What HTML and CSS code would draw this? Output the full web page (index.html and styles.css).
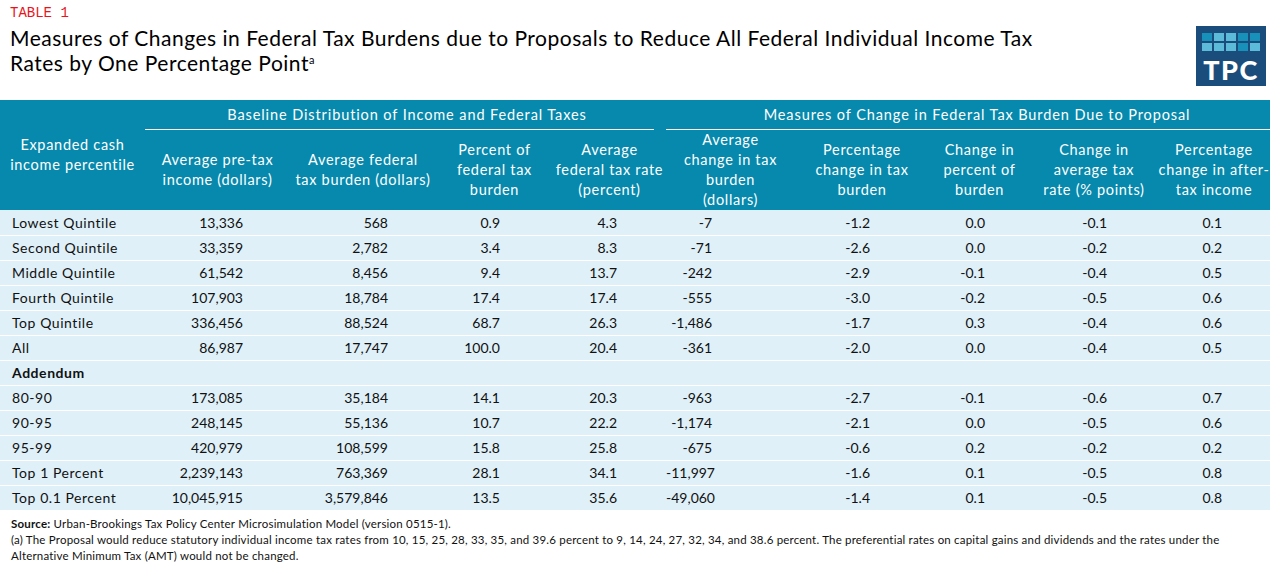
FILE: index.html
```html
<!DOCTYPE html>
<html>
<head>
<meta charset="utf-8">
<link rel="stylesheet" href="styles.css">
</head>
<body>
<div class="page">
  <header class="top">
    <div class="titles">
      <div class="label">TABLE 1</div>
      <h1 class="title">Measures of Changes in Federal Tax Burdens due to Proposals to Reduce All Federal Individual Income Tax<br>Rates by One Percentage Point<sup>a</sup></h1>
    </div>
    <div class="logo">
      <div class="grid">
        <span class="d"></span><span class="l"></span><span class="l"></span><span class="d"></span><span class="d"></span>
        <span class="l"></span><span class="l"></span><span class="l"></span><span class="d"></span><span class="l"></span>
      </div>
      <div class="logo-text">TPC</div>
    </div>
  </header>

  <table class="data">
    <colgroup>
      <col class="w1"><col class="w2"><col class="w3"><col class="w4"><col class="w5">
      <col class="w6"><col class="w7"><col class="w8"><col class="w9"><col class="w10">
    </colgroup>
    <thead>
      <tr class="group">
        <th rowspan="2" class="first">Expanded cash<br>income percentile</th>
        <th colspan="4"><div class="gline g1">Baseline Distribution of Income and Federal Taxes</div></th>
        <th colspan="5"><div class="gline g2">Measures of Change in Federal Tax Burden Due to Proposal</div></th>
      </tr>
      <tr class="sub">
        <th>Average pre-tax<br>income (dollars)</th>
        <th>Average federal<br>tax burden (dollars)</th>
        <th>Percent of<br>federal tax<br>burden</th>
        <th>Average<br>federal tax rate<br>(percent)</th>
        <th>Average<br>change in tax<br>burden<br>(dollars)</th>
        <th>Percentage<br>change in tax<br>burden</th>
        <th>Change in<br>percent of<br>burden</th>
        <th>Change in<br>average tax<br>rate (% points)</th>
        <th>Percentage<br>change in after-<br>tax income</th>
      </tr>
    </thead>
    <tbody>
      <tr><td>Lowest Quintile</td><td>13,336</td><td>568</td><td>0.9</td><td>4.3</td><td>-7</td><td>-1.2</td><td>0.0</td><td>-0.1</td><td>0.1</td></tr>
      <tr><td>Second Quintile</td><td>33,359</td><td>2,782</td><td>3.4</td><td>8.3</td><td>-71</td><td>-2.6</td><td>0.0</td><td>-0.2</td><td>0.2</td></tr>
      <tr><td>Middle Quintile</td><td>61,542</td><td>8,456</td><td>9.4</td><td>13.7</td><td>-242</td><td>-2.9</td><td>-0.1</td><td>-0.4</td><td>0.5</td></tr>
      <tr><td>Fourth Quintile</td><td>107,903</td><td>18,784</td><td>17.4</td><td>17.4</td><td>-555</td><td>-3.0</td><td>-0.2</td><td>-0.5</td><td>0.6</td></tr>
      <tr><td>Top Quintile</td><td>336,456</td><td>88,524</td><td>68.7</td><td>26.3</td><td>-1,486</td><td>-1.7</td><td>0.3</td><td>-0.4</td><td>0.6</td></tr>
      <tr><td>All</td><td>86,987</td><td>17,747</td><td>100.0</td><td>20.4</td><td>-361</td><td>-2.0</td><td>0.0</td><td>-0.4</td><td>0.5</td></tr>
      <tr><td class="bold">Addendum</td><td></td><td></td><td></td><td></td><td></td><td></td><td></td><td></td><td></td></tr>
      <tr><td>80-90</td><td>173,085</td><td>35,184</td><td>14.1</td><td>20.3</td><td>-963</td><td>-2.7</td><td>-0.1</td><td>-0.6</td><td>0.7</td></tr>
      <tr><td>90-95</td><td>248,145</td><td>55,136</td><td>10.7</td><td>22.2</td><td>-1,174</td><td>-2.1</td><td>0.0</td><td>-0.5</td><td>0.6</td></tr>
      <tr><td>95-99</td><td>420,979</td><td>108,599</td><td>15.8</td><td>25.8</td><td>-675</td><td>-0.6</td><td>0.2</td><td>-0.2</td><td>0.2</td></tr>
      <tr><td>Top 1 Percent</td><td>2,239,143</td><td>763,369</td><td>28.1</td><td>34.1</td><td>-11,997</td><td>-1.6</td><td>0.1</td><td>-0.5</td><td>0.8</td></tr>
      <tr><td>Top 0.1 Percent</td><td>10,045,915</td><td>3,579,846</td><td>13.5</td><td>35.6</td><td>-49,060</td><td>-1.4</td><td>0.1</td><td>-0.5</td><td>0.8</td></tr>
    </tbody>
  </table>

  <div class="notes">
    <p><b>Source:</b> Urban-Brookings Tax Policy Center Microsimulation Model (version 0515-1).</p>
    <p>(a) The Proposal would reduce statutory individual income tax rates from 10, 15, 25, 28, 33, 35, and 39.6 percent to 9, 14, 24, 27, 32, 34, and 38.6 percent. The preferential rates on capital gains and dividends and the rates under the<br>Alternative Minimum Tax (AMT) would not be changed.</p>
  </div>
</div>
</body>
</html>
```

FILE: styles.css
```css
* { box-sizing: border-box; }
html, body { margin: 0; padding: 0; background: #fff; }
body { font-family: "Lato", "Open Sans", sans-serif; color: #111; }
.page { width: 1270px; }

.top {
  display: flex;
  justify-content: space-between;
  align-items: flex-start;
  height: 100px;
}
.titles { padding: 5px 0 0 10px; }
.label {
  font-family: "Liberation Mono", "Courier New", monospace;
  color: #e8141b;
  font-size: 14px;
  line-height: 16px;
}
.title {
  margin: 4px 0 0 0;
  font-weight: 400;
  font-size: 21px;
  line-height: 25px;
  letter-spacing: 0.5px;
  color: #000;
}
.title sup { font-size: 11px; vertical-align: 7px; line-height: 0; letter-spacing: 0; }

.logo {
  margin: 26px 4px 0 0;
  width: 70px;
  height: 60px;
  background: #1b4d7c;
  display: flex;
  flex-direction: column;
  align-items: center;
  padding-top: 7px;
}
.grid {
  display: grid;
  grid-template-columns: repeat(5, 10px);
  grid-auto-rows: 8px;
  gap: 2px;
}
.grid .l { background: #5bbbd9; }
.grid .d { background: #1791b9; }
.logo-text {
  color: #fff;
  font-family: "Lato", sans-serif;
  font-weight: 900;
  font-size: 27px;
  line-height: 26px;
  letter-spacing: 1.5px;
  margin-top: 6px;
}

.data {
  width: 1270px;
  table-layout: fixed;
  border-collapse: collapse;
  font-size: 14px;
}
.w1 { width: 145px; } .w2 { width: 145px; } .w3 { width: 146px; } .w4 { width: 117px; }
.w5 { width: 113px; } .w6 { width: 129px; } .w7 { width: 134px; } .w8 { width: 101px; }
.w9 { width: 128px; } .w10 { width: 112px; }

.data thead { background: #0689ad; color: #fff; }
.data th { font-weight: 400; font-size: 14.5px; padding: 0; letter-spacing: 0.7px; white-space: nowrap; }
.group th { height: 30px; vertical-align: bottom; }
.group th.first { line-height: 20px; vertical-align: middle; }
.gline {
  line-height: 28px;
  border-bottom: 1.5px solid #fff;
  letter-spacing: 0.9px;
}
.g1 { margin-right: 12px; padding-left: 15px; }
.g2 { padding-left: 18px; }
.sub th { height: 80px; line-height: 20px; vertical-align: middle; }

.data td {
  height: 25px;
  background: #dff0f8;
  border-bottom: 1px solid #fff;
  text-align: right;
  padding: 0;
  white-space: nowrap;
  font-weight: 400;
  color: #111;
}
.data td:nth-child(1) { text-align: left; padding-left: 12px; letter-spacing: 0.55px; }
.data td:nth-child(2) { padding-right: 47px; }
.data td:nth-child(3) { padding-right: 48px; }
.data td:nth-child(4) { padding-right: 53px; }
.data td:nth-child(5) { padding-right: 49px; }
.data td:nth-child(6) { padding-right: 83px; }
.data td:nth-child(7) { padding-right: 59px; }
.data td:nth-child(8) { padding-right: 45px; }
.data td:nth-child(9) { padding-right: 51px; }
.data td:nth-child(10) { padding-right: 48px; }
.data td.bold { font-weight: 700; }

.notes { padding: 5px 0 0 11px; font-size: 11.5px; line-height: 16px; letter-spacing: 0.2px; color: #111; }
.notes p { margin: 0; white-space: nowrap; }
```
